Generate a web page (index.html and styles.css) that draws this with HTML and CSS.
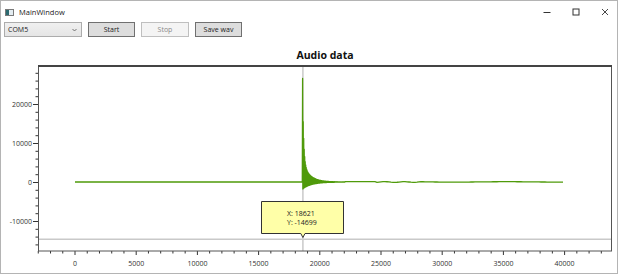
FILE: index.html
```html
<!DOCTYPE html>
<html lang="en">
<head>
    <meta charset="UTF-8">
    <title>MainWindow</title>
    <link rel="stylesheet" href="styles.css">
</head>
<body>
    <div class="window">
        <div class="titlebar">
            <div class="app-icon"><span></span></div>
            <span class="title">MainWindow</span>
            <div class="window-controls">
                <svg width="8" height="8" viewBox="0 0 8 8"><path d="M0.5 4.5H7.5" stroke="#333" stroke-width="1"/></svg>
                <svg width="8" height="8" viewBox="0 0 8 8"><rect x="1" y="1" width="6" height="6" fill="none" stroke="#333" stroke-width="1"/></svg>
                <svg width="8" height="8" viewBox="0 0 8 8"><path d="M1 1L7 7M7 1L1 7" stroke="#333" stroke-width="0.9"/></svg>
            </div>
        </div>

        <div class="toolbar">
            <div class="combo">
                <span>COM5</span>
                <svg width="5" height="4" viewBox="0 0 5 4"><path d="M0.5 1L2.5 3L4.5 1" fill="none" stroke="#555" stroke-width="0.8"/></svg>
            </div>
            <button class="btn">Start</button>
            <button class="btn" disabled>Stop</button>
            <button class="btn">Save wav</button>
        </div>

        <svg class="chart" id="chart" width="616" height="236" viewBox="1 37 616 236">
            <text class="chart-title" x="325" y="59">Audio data</text>
            <g id="axes"></g>
            <!-- tracker lines -->
            <line class="tracker" x1="38.5" y1="239.3" x2="611.5" y2="239.3"/>
            <line class="tracker" x1="302.9" y1="67" x2="302.9" y2="251"/>
            <polyline id="series" class="series" points=""/>
            <rect class="frame" x="38.5" y="66.5" width="573" height="184.5"/>
            <line class="frame-top" x1="38" y1="66" x2="612" y2="66"/>
            <!-- tracker tooltip -->
            <path class="tooltip" d="M261.5 201.5H343.5V233.5H305L302.9 237.5L300.8 233.5H261.5Z"/>
            <text class="tooltip-text" x="287" y="215.5">X: 18621</text>
            <text class="tooltip-text" x="287" y="225">Y: -14699</text>
        </svg>
    </div>

    <script>
        document.addEventListener('DOMContentLoaded', function() {
            const ns = 'http://www.w3.org/2000/svg';
            const axes = document.getElementById('axes');
            const series = document.getElementById('series');

            // data -> pixel mapping
            function xPos(v) { return 75 + v * 61.2 / 5000; }
            function yPos(v) { return 182 - v * 39 / 10000; }

            function add(tag, attrs, text) {
                const el = document.createElementNS(ns, tag);
                for (const k in attrs) el.setAttribute(k, attrs[k]);
                if (text) el.textContent = text;
                axes.appendChild(el);
            }

            // y axis
            for (let v = -16000; v <= 28000; v += 2000) {
                const y = yPos(v) + 0.5;
                const major = v % 10000 === 0;
                add('line', { class: 'tick', x1: major ? 33 : 35.5, y1: y, x2: 38.5, y2: y });
                if (major) add('text', { class: 'axis-label', x: 32, y: y + 2.5, 'text-anchor': 'end' }, String(v));
            }

            // x axis
            for (let v = -3000; v <= 43000; v += 1000) {
                const x = xPos(v);
                const major = v % 5000 === 0;
                add('line', { class: 'tick', x1: x, y1: 251, x2: x, y2: major ? 255 : 253.5 });
                if (major) add('text', { class: 'axis-label', x: x, y: 266, 'text-anchor': 'middle' }, String(v));
            }

            // waveform
            const pts = [[75, 182], [302.3, 182], [302.6, 78.5], [302.9, 189]];
            let up = true;
            for (let x = 303.2; x < 345; x += 0.25) {
                const d = x - 302.5;
                const au = 80 * Math.exp(-d / 1.1) + 20 * Math.exp(-d / 7);
                const al = 7 * Math.exp(-d / 9);
                pts.push([x, up ? 182 - au : 182 + al]);
                up = !up;
            }
            for (let x = 345; x <= 564.5; x += 2) {
                let y = 181.7;
                if (x > 375 && x < 425) y = 182 + 0.35 * Math.sin(x / 3.1);
                else if (x >= 425) y = 181.9 + 0.2 * Math.sin(x / 17);
                pts.push([x, y]);
            }
            series.setAttribute('points', pts.map(p => p[0].toFixed(2) + ',' + p[1].toFixed(2)).join(' '));
        });
    </script>
</body>
</html>
```

FILE: styles.css
```css
* {
    box-sizing: border-box;
    margin: 0;
    padding: 0;
}

body {
    background-color: #ffffff;
    font-family: 'Open Sans', 'Liberation Sans', sans-serif;
    font-size: 7px;
    color: #1a1a1a;
}

.window {
    width: 618px;
    height: 274px;
    border: 1px solid #b4b4b4;
    background-color: #ffffff;
    display: flex;
    flex-direction: column;
}

.titlebar {
    height: 21px;
    display: flex;
    align-items: center;
    padding-left: 4px;
}

.app-icon {
    width: 9px;
    height: 7px;
    border: 1px solid #7a7a7a;
    background-color: #e4edf2;
    margin-right: 5px;
    margin-top: 1px;
}

.app-icon span {
    display: block;
    width: 3px;
    height: 100%;
    background-color: #2b6a70;
}

.title {
    font-size: 7.5px;
    color: #222;
}

.window-controls {
    margin-left: auto;
    display: flex;
    gap: 21px;
    padding-right: 8px;
    padding-top: 1px;
}

.window-controls svg {
    display: block;
}

.toolbar {
    height: 15px;
    display: flex;
    gap: 6px;
    padding-left: 3px;
}

.combo {
    width: 78px;
    height: 15px;
    border: 1px solid #acacac;
    background: linear-gradient(#f0f0f0, #e5e5e5);
    display: flex;
    align-items: center;
    justify-content: space-between;
    padding: 0 4px 0 3px;
}

.btn {
    width: 47px;
    height: 15px;
    border: 1px solid #707070;
    background-color: #dddddd;
    font-family: inherit;
    font-size: 7px;
    color: #1a1a1a;
}

.btn:nth-of-type(2) {
    width: 48px;
}

.btn:disabled {
    border-color: #bfbfbf;
    background-color: #f4f4f4;
    color: #8a8a8a;
}

.chart {
    display: block;
}

.chart-title {
    font-size: 10.5px;
    font-weight: bold;
    text-anchor: middle;
    fill: #111;
}

.tick {
    stroke: #333;
    stroke-width: 1;
}

.axis-label {
    font-size: 7px;
    fill: #333;
}

.tracker {
    stroke: #c9c9c9;
    stroke-width: 1.5;
}

.series {
    fill: none;
    stroke: #4f9a0a;
    stroke-width: 1.3;
    stroke-linejoin: round;
}

.frame {
    fill: none;
    stroke: #555;
    stroke-width: 1;
}

.frame-top {
    stroke: #444;
    stroke-width: 2;
}

.tooltip {
    fill: #ffffa8;
    stroke: #333;
    stroke-width: 1;
}

.tooltip-text {
    font-size: 7px;
    fill: #222;
}
```
